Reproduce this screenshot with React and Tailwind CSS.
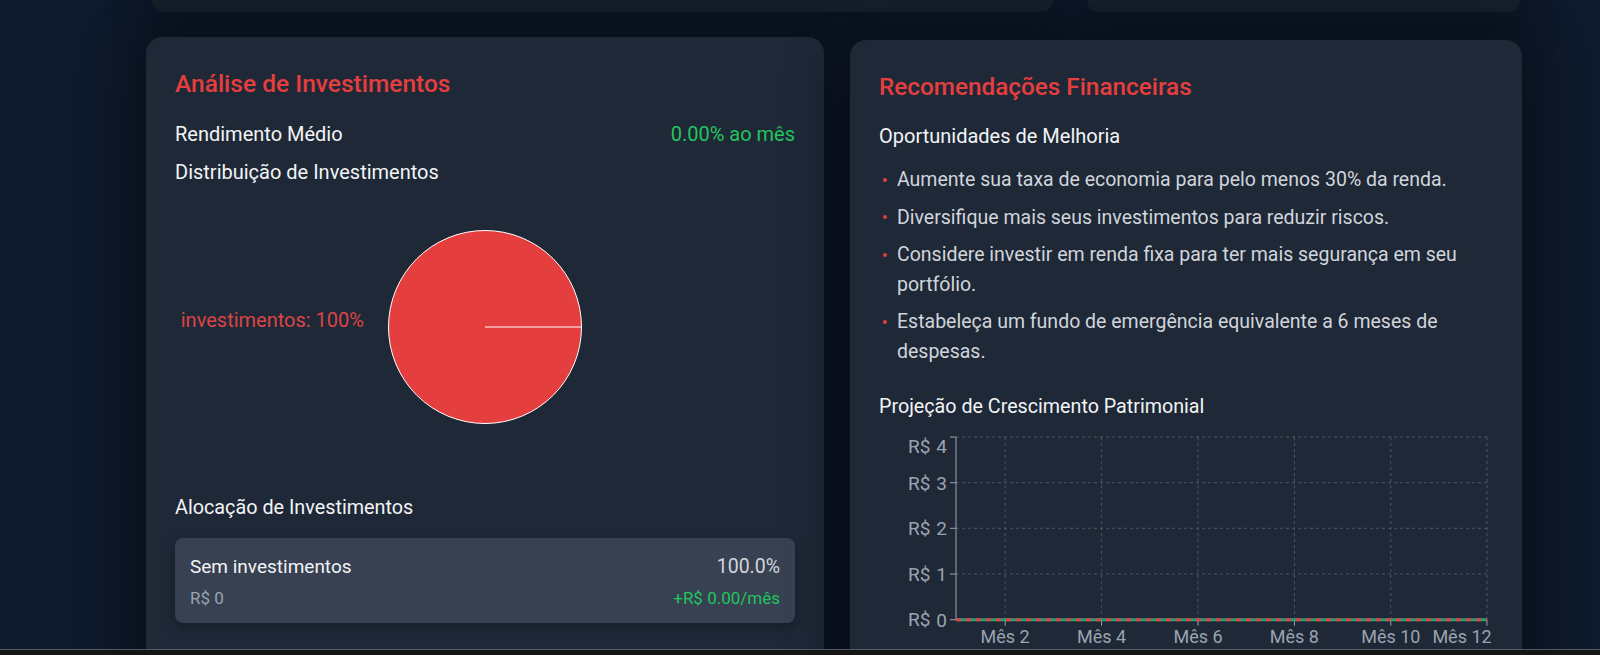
import React from "react";

function PieChart() {
  const cx = 310;
  const cy = 143;
  const r = 96.5;
  return (
    <svg width="620" height="286" className="block overflow-hidden">
      <circle cx={cx} cy={cy} r={r} fill="#e53e3e" stroke="#ffffff" strokeWidth="1" />
      <line x1={cx} y1={cy} x2={cx + r} y2={cy} stroke="#ffffff" strokeWidth="1" />
      <text
        x="189"
        y="136"
        textAnchor="end"
        dominantBaseline="central"
        fill="#dc4447"
        fontSize="20"
        fontFamily="Roboto, sans-serif"
      >
        Sem investimentos: 100%
      </text>
    </svg>
  );
}

function GrowthChart() {
  const x0 = 77;
  const x1 = 608;
  const ys = [10, 55.7, 101.3, 147, 192.7];
  const yLabels = [
    { t: "4", y: 19 },
    { t: "3", y: 56 },
    { t: "2", y: 101 },
    { t: "1", y: 147 },
    { t: "0", y: 192.7 },
  ];
  const xs = [126.2, 222.6, 319, 415.4, 511.8, 608];
  const xLabels = [
    { t: "Mês 2", x: 126 },
    { t: "Mês 4", x: 222.6 },
    { t: "Mês 6", x: 319 },
    { t: "Mês 8", x: 415.4 },
    { t: "Mês 10", x: 511.8 },
    { t: "Mês 12", x: 583 },
  ];
  const base = 192.7;
  return (
    <svg width="614" height="240" className="block" fontFamily="Roboto, sans-serif">
      {ys.map((y, i) => (
        <line key={"h" + i} x1={x0} y1={y} x2={x1} y2={y} stroke="#4b5563" strokeDasharray="3 3" />
      ))}
      {xs.map((x, i) => (
        <line key={"v" + i} x1={x} y1={ys[0]} x2={x} y2={base} stroke="#4b5563" strokeDasharray="3 3" />
      ))}
      <line x1={x0} y1={ys[0]} x2={x0} y2={base} stroke="#9ca3af" />
      <line x1={x0} y1={base} x2={x1} y2={base} stroke="#9ca3af" />
      {ys.map((y, i) => (
        <line key={"yt" + i} x1={x0 - 6} y1={y} x2={x0} y2={y} stroke="#9ca3af" />
      ))}
      {xs.map((x, i) => (
        <line key={"xt" + i} x1={x} y1={base} x2={x} y2={base + 6} stroke="#9ca3af" />
      ))}
      {yLabels.map((l, i) => (
        <text key={"yl" + i} x={68} y={l.y} textAnchor="end" dominantBaseline="central" fill="#9ca3af" fontSize="19">
          R$<tspan dx="6">{l.t}</tspan>
        </text>
      ))}
      {xLabels.map((l, i) => (
        <text key={"xl" + i} x={l.x} y={209.7} textAnchor="middle" dominantBaseline="central" fill="#9ca3af" fontSize="18">
          {l.t}
        </text>
      ))}
      <line x1={x0} y1={base} x2={x1} y2={base} stroke="#2f9e72" strokeWidth="3" />
      <line x1={x0} y1={base} x2={x1} y2={base} stroke="#d9464a" strokeWidth="3" strokeDasharray="5 5" />
    </svg>
  );
}

function Bullet({ children }) {
  return (
    <li className="flex">
      <span className="flex h-[29.5px] w-[18px] shrink-0 items-center">
        <span className="ml-[4px] h-[4px] w-[4px] rounded-full bg-[#e53e3e]" />
      </span>
      <span className="text-[19.5px] leading-[29.5px] text-[#d1d5db]">{children}</span>
    </li>
  );
}

export default function App() {
  return (
    <div className="relative h-[655px] w-[1600px] overflow-hidden bg-[#0e192b] font-['Roboto',sans-serif] text-[#f3f4f6]">
      <div className="flex gap-[34px] pl-[152px]">
        <div className="h-[12px] w-[901px] rounded-b-2xl bg-[#161e2b] shadow-[0_8px_40px_8px_rgba(0,0,0,0.4)]" />
        <div className="h-[12px] w-[433px] rounded-b-2xl bg-[#161e2b] shadow-[0_8px_40px_8px_rgba(0,0,0,0.4)]" />
      </div>

      <div className="mt-[25px] flex items-start gap-[26px] pl-[146px]">
        <div className="h-[700px] w-[678px] shrink-0 rounded-2xl bg-[#1e2837] px-[29px] pt-[31px] shadow-[0_10px_50px_12px_rgba(0,0,0,0.4)]">
          <h2 className="text-[24.5px] font-medium leading-[32px] text-[#e53e3e]">Análise de Investimentos</h2>
          <div className="mt-[20px] flex items-center justify-between text-[20px] leading-[28px]">
            <span className="text-[#f3f4f6]">Rendimento Médio</span>
            <span className="text-[#22c55e]">0.00% ao mês</span>
          </div>
          <h3 className="mt-[12px] text-[20px] leading-[24px] text-[#f3f4f6]">Distribuição de Investimentos</h3>
          <div className="h-[286px] w-[620px] overflow-hidden">
            <PieChart />
          </div>
          <h3 className="mt-[24px] text-[19.8px] leading-[28px] text-[#f3f4f6]">Alocação de Investimentos</h3>
          <div className="mt-[16px] rounded-lg bg-[#374151] px-[15px] pb-[15px] pt-[16px] shadow-[0_4px_12px_rgba(0,0,0,0.3)]">
            <div className="flex items-center justify-between leading-[26px]">
              <span className="text-[19px] text-[#f3f4f6]">Sem investimentos</span>
              <span className="text-[19.5px] text-[#d1d5db]">100.0%</span>
            </div>
            <div className="mt-[8px] flex items-center justify-between leading-[20px]">
              <span className="text-[17px] text-[#9ca3af]">R$ 0</span>
              <span className="text-[17px] text-[#22c55e]">+R$ 0.00/mês</span>
            </div>
          </div>
        </div>

        <div className="mt-[3px] h-[700px] w-[672px] shrink-0 rounded-2xl bg-[#1e2837] px-[29px] pt-[31px] shadow-[0_10px_50px_12px_rgba(0,0,0,0.4)]">
          <h2 className="text-[24.3px] font-medium leading-[32px] text-[#e53e3e]">Recomendações Financeiras</h2>
          <h3 className="mt-[19px] text-[20px] leading-[28px] text-[#f3f4f6]">Oportunidades de Melhoria</h3>
          <ul className="mt-[15px] flex flex-col gap-[8px]">
            <Bullet>Aumente sua taxa de economia para pelo menos 30% da renda.</Bullet>
            <Bullet>Diversifique mais seus investimentos para reduzir riscos.</Bullet>
            <Bullet>Considere investir em renda fixa para ter mais segurança em seu portfólio.</Bullet>
            <Bullet>Estabeleça um fundo de emergência equivalente a 6 meses de despesas.</Bullet>
          </ul>
          <h3 className="mt-[27px] text-[19.7px] leading-[28px] text-[#f3f4f6]">Projeção de Crescimento Patrimonial</h3>
          <div className="mt-[6px]">
            <GrowthChart />
          </div>
        </div>
      </div>

      <div className="absolute bottom-0 left-0 right-0 h-[6px] border-t border-[#555a60] bg-[#151515]" />
    </div>
  );
}
